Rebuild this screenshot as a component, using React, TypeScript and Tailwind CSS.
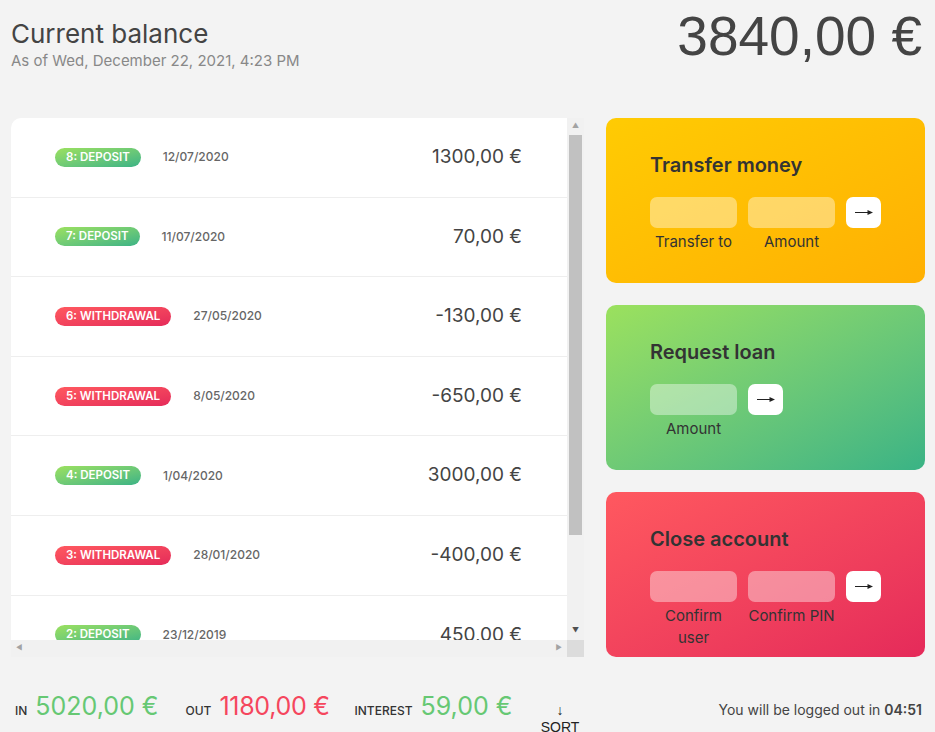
const movements = [
  { n: 8, type: 'deposit', date: '12/07/2020', value: '1300,00 €' },
  { n: 7, type: 'deposit', date: '11/07/2020', value: '70,00 €' },
  { n: 6, type: 'withdrawal', date: '27/05/2020', value: '-130,00 €' },
  { n: 5, type: 'withdrawal', date: '8/05/2020', value: '-650,00 €' },
  { n: 4, type: 'deposit', date: '1/04/2020', value: '3000,00 €' },
  { n: 3, type: 'withdrawal', date: '28/01/2020', value: '-400,00 €' },
  { n: 2, type: 'deposit', date: '23/12/2019', value: '450,00 €' },
  { n: 1, type: 'deposit', date: '18/11/2019', value: '200,00 €' },
];

// thin long arrow used on the form buttons
const Arrow = () => (
  <svg width="20" height="9" viewBox="0 0 20 9">
    <line x1="1" y1="4.5" x2="16" y2="4.5" stroke="#222" strokeWidth="1" />
    <path d="M13.5 2 L19 4.5 L13.5 7 Z" fill="#222" />
  </svg>
);

// one of the three colored operation cards
const OpCard = ({
  title,
  bg,
  labels,
  loan = false,
}: {
  title: string;
  bg: string;
  labels: string[];
  loan?: boolean;
}) => (
  <div className={`h-[165px] rounded-[10px] px-[44px] pt-[33px] text-[#333] ${bg}`}>
    <h2 className="text-[20px] font-semibold leading-[28px] mb-[18px]">{title}</h2>
    {loan ? (
      <div className="grid grid-cols-[87px_35px] gap-x-[11px] gap-y-[3px]">
        <div className="h-[31px] rounded-[7px] bg-white/40" />
        <button className="h-[31px] rounded-[7px] bg-white flex items-center justify-center">
          <Arrow />
        </button>
        <div className="text-center text-[15px] leading-[22px]">{labels[0]}</div>
      </div>
    ) : (
      <div className="grid grid-cols-[87px_87px_35px] gap-x-[11px] gap-y-[3px]">
        <div className="h-[31px] rounded-[7px] bg-white/40" />
        <div className="h-[31px] rounded-[7px] bg-white/40" />
        <button className="h-[31px] rounded-[7px] bg-white flex items-center justify-center">
          <Arrow />
        </button>
        <div className="text-center text-[15px] leading-[22px]">{labels[0]}</div>
        <div className="text-center text-[15px] leading-[22px]">{labels[1]}</div>
      </div>
    )}
  </div>
);

export default function App() {
  return (
    <div className="w-[935px] h-[732px] overflow-hidden bg-[#f3f3f3] text-[#444] font-['Inter',sans-serif]">
      {/* header */}
      <div className="h-[118px] flex justify-between pl-[11px] pr-[13px]">
        <div className="pt-[18px]">
          <p className="text-[26px] leading-[32px] text-[#444]">Current balance</p>
          <p className="text-[15px] leading-[22px] text-[#888]">As of Wed, December 22, 2021, 4:23 PM</p>
        </div>
        <p className="pt-[9px] text-[55px] leading-none font-['Liberation_Sans',sans-serif] text-[#444]">
          3840,00 €
        </p>
      </div>

      <div className="flex gap-[22px] pl-[11px]">
        {/* left column */}
        <div className="w-[573px]">
          <div className="h-[539px] bg-white rounded-tl-[10px] overflow-hidden flex flex-col">
            <div className="flex flex-1 min-h-0">
              <div className="flex-1 overflow-hidden">
                {movements.map((m) => (
                  <div
                    key={m.n}
                    className="h-[79.6px] flex items-center pl-[44px] pr-[45px] border-b border-[#eee] whitespace-nowrap"
                  >
                    <span
                      className={`rounded-full px-[11px] h-[19px] leading-[19px] text-[11.5px] font-semibold uppercase text-white ${
                        m.type === 'deposit'
                          ? 'bg-linear-to-tl from-[#39b385] to-[#9be15d]'
                          : 'bg-linear-to-tl from-[#e52a5a] to-[#ff585f]'
                      }`}
                    >
                      {m.n}: {m.type}
                    </span>
                    <span className="ml-[22px] text-[12px] font-medium text-[#666]">{m.date}</span>
                    <span className="ml-auto text-[19px] text-[#444]">{m.value}</span>
                  </div>
                ))}
              </div>
              {/* vertical scrollbar */}
              <div className="w-[17px] bg-[#f1f1f1] flex flex-col items-center">
                <div className="h-[17px] flex items-center justify-center text-[7px] text-[#a3a3a3]">▲</div>
                <div className="w-[13px] h-[400px] bg-[#c1c1c1]" />
                <div className="flex-1" />
                <div className="h-[17px] flex items-center justify-center text-[7px] text-[#505050]">▼</div>
              </div>
            </div>
            {/* horizontal scrollbar */}
            <div className="h-[17px] flex bg-[#f1f1f1]">
              <div className="flex-1 flex items-center justify-between px-[5px] text-[7px] text-[#a3a3a3]">
                <span>◀</span>
                <span>▶</span>
              </div>
              <div className="w-[17px] bg-[#dcdcdc]" />
            </div>
          </div>

          {/* summary */}
          <div className="flex items-baseline pl-[4px] mt-[31px] whitespace-nowrap">
            <span className="text-[12px] font-medium uppercase mr-[8px] text-[#333]">In</span>
            <span className="text-[25px] text-[#66c873] mr-[27px]">5020,00 €</span>
            <span className="text-[12px] font-medium uppercase mr-[8px] text-[#333]">Out</span>
            <span className="text-[25px] tracking-[-0.3px] text-[#f5465d] mr-[25px]">1180,00 €</span>
            <span className="text-[12px] font-medium uppercase mr-[8px] text-[#333]">Interest</span>
            <span className="text-[25px] text-[#66c873]">59,00 €</span>
            <button className="ml-auto mr-[4px] w-[40px] whitespace-normal text-[14px] leading-[17px] text-[#222] font-['Liberation_Sans',sans-serif]">
              ↓ SORT
            </button>
          </div>
        </div>

        {/* right column */}
        <div className="w-[319px]">
          <div className="flex flex-col gap-[22px]">
            <OpCard
              title="Transfer money"
              bg="bg-linear-to-tl from-[#ffb003] to-[#ffcb03]"
              labels={['Transfer to', 'Amount']}
            />
            <OpCard
              title="Request loan"
              bg="bg-linear-to-tl from-[#39b385] to-[#9be15d]"
              labels={['Amount']}
              loan
            />
            <OpCard
              title="Close account"
              bg="bg-linear-to-tl from-[#e52a5a] to-[#ff585f]"
              labels={['Confirm user', 'Confirm PIN']}
            />
          </div>
          <p className="mt-[42px] text-right pr-[3px] text-[14px] text-[#444]">
            You will be logged out in <span className="font-semibold">04:51</span>
          </p>
        </div>
      </div>
    </div>
  );
}
